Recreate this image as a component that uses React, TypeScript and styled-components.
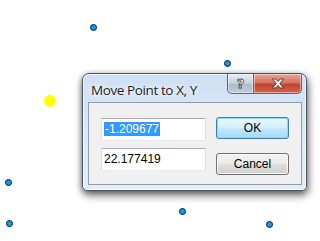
import React from 'react';
import styled, { createGlobalStyle } from 'styled-components';

const GlobalStyle = createGlobalStyle`
  html, body {
    margin: 0;
    padding: 0;
    background: #ffffff;
    width: 320px;
    height: 241px;
    overflow: hidden;
  }
`;

const Canvas = styled.div`
  position: relative;
  width: 320px;
  height: 241px;
  background: #ffffff;
  overflow: hidden;
`;

const Dot = styled.div<{ highlight?: boolean }>`
  position: absolute;
  width: ${({ highlight }) => (highlight ? '12px' : '7px')};
  height: ${({ highlight }) => (highlight ? '12px' : '7px')};
  margin-left: ${({ highlight }) => (highlight ? '-6px' : '-3.5px')};
  margin-top: ${({ highlight }) => (highlight ? '-6px' : '-3.5px')};
  border-radius: 50%;
  box-sizing: border-box;
  background: ${({ highlight }) => (highlight ? '#ffff00' : '#0a9cf0')};
  border: ${({ highlight }) => (highlight ? 'none' : '1px solid #0b1a2a')};
`;

const Window = styled.div`
  position: absolute;
  left: 82px;
  top: 73px;
  width: 225px;
  height: 118px;
  box-sizing: border-box;
  border: 1px solid #4b5561;
  border-radius: 7px 7px 5px 5px;
  background: linear-gradient(180deg, #cfdff3 0%, #d8e6f6 40%, #e2edf9 100%);
  box-shadow: 1px 4px 9px rgba(0, 0, 0, 0.6), -1px 1px 5px rgba(0, 0, 0, 0.25),
    inset 0 0 0 1px rgba(255, 255, 255, 0.7);
  display: flex;
  flex-direction: column;
  padding: 0 4px 5px 5px;
`;

const TitleBar = styled.div`
  height: 28px;
  display: flex;
  align-items: flex-start;
  justify-content: space-between;
`;

const Title = styled.span`
  font-family: 'Open Sans', 'Noto Sans', sans-serif;
  font-size: 13.5px;
  letter-spacing: -0.4px;
  color: #1a1a1a;
  margin: 7px 0 0 3px;
  text-shadow: 0 0 6px #ffffff, 0 0 3px #ffffff;
`;

const CaptionButtons = styled.div`
  display: flex;
`;

const CaptionButton = styled.div<{ close?: boolean }>`
  width: ${({ close }) => (close ? '48px' : '27px')};
  height: 20px;
  box-sizing: border-box;
  border: 1px solid #5d6976;
  border-top: none;
  border-left: ${({ close }) => (close ? 'none' : '1px solid #5d6976')};
  border-radius: ${({ close }) => (close ? '0 0 5px 0' : '0 0 0 5px')};
  background: ${({ close }) =>
    close
      ? 'linear-gradient(180deg, #e8a79a 0%, #d5735f 45%, #c2452d 55%, #d0634a 100%)'
      : 'linear-gradient(180deg, #e6edf5 0%, #c8d3df 45%, #aebccc 55%, #bfccd9 100%)'};
  box-shadow: inset 0 0 0 1px rgba(255, 255, 255, 0.45);
  display: flex;
  align-items: center;
  justify-content: center;
`;

const HelpGlyph = styled.span`
  font-family: 'DejaVu Sans', sans-serif;
  font-weight: bold;
  font-size: 13px;
  line-height: 1;
  color: #ffffff;
  -webkit-text-stroke: 0.8px #3d4752;
  margin-top: -1px;
`;

const Client = styled.div`
  flex: 1;
  box-sizing: border-box;
  border: 1px solid #8e9cb0;
  background: #f0f0f0;
  display: flex;
  padding: 14px 12px 0 12px;
  gap: 10px;
`;

const InputColumn = styled.div`
  display: flex;
  flex-direction: column;
  gap: 7px;
  padding-top: 1px;
`;

const ButtonColumn = styled.div`
  display: flex;
  flex-direction: column;
  gap: 14px;
`;

const TextBox = styled.div`
  width: 105px;
  height: 23px;
  box-sizing: border-box;
  background: #ffffff;
  border: 1px solid #dbdfe6;
  border-top-color: #abadb3;
  border-bottom-color: #e3e9ef;
  padding: 3px 0 0 2px;
  font-family: 'Liberation Sans', Arial, sans-serif;
  font-size: 12px;
  line-height: 15px;
  color: #000000;
`;

const Selected = styled.span`
  background: #3399ff;
  color: #ffffff;
  padding: 0 1px;
`;

const PushButton = styled.div<{ primary?: boolean }>`
  width: 73px;
  height: 22px;
  box-sizing: border-box;
  border-radius: 3px;
  border: 1px solid ${({ primary }) => (primary ? '#3c7fb1' : '#707070')};
  background: ${({ primary }) =>
    primary
      ? 'linear-gradient(180deg, #eaf6fd 0%, #d9f0fc 45%, #bee6fd 55%, #a7d9f5 100%)'
      : 'linear-gradient(180deg, #f2f2f2 0%, #ebebeb 45%, #dddddd 55%, #cfcfcf 100%)'};
  box-shadow: inset 0 0 0 1px ${({ primary }) => (primary ? '#7de0fb' : '#fcfcfc')};
  display: flex;
  align-items: center;
  justify-content: center;
  font-family: 'Liberation Sans', Arial, sans-serif;
  font-size: 12px;
  color: #000000;
`;

const points = [
  { x: 93, y: 27 },
  { x: 227, y: 63 },
  { x: 8, y: 182 },
  { x: 9, y: 223 },
  { x: 182, y: 211 },
  { x: 269, y: 224 },
];

const CloseIcon = () => (
  <svg width="14" height="11" viewBox="0 0 14 11">
    <path
      d="M1.5 1 H4.8 L7 3.6 L9.2 1 H12.5 L8.8 5.5 L12.5 10 H9.2 L7 7.4 L4.8 10 H1.5 L5.2 5.5 Z"
      fill="#ffffff"
      stroke="#43302c"
      strokeWidth="0.9"
      strokeLinejoin="round"
    />
  </svg>
);

export default function App() {
  return (
    <>
      <GlobalStyle />
      <Canvas>
        {points.map((p, i) => (
          <Dot key={i} style={{ left: p.x, top: p.y }} />
        ))}
        <Dot highlight style={{ left: 49.5, top: 100.5 }} />
        <Window>
          <TitleBar>
            <Title>Move Point to X, Y</Title>
            <CaptionButtons>
              <CaptionButton>
                <HelpGlyph>?</HelpGlyph>
              </CaptionButton>
              <CaptionButton close>
                <CloseIcon />
              </CaptionButton>
            </CaptionButtons>
          </TitleBar>
          <Client>
            <InputColumn>
              <TextBox>
                <Selected>-1.209677</Selected>
              </TextBox>
              <TextBox>22.177419</TextBox>
            </InputColumn>
            <ButtonColumn>
              <PushButton primary>OK</PushButton>
              <PushButton>Cancel</PushButton>
            </ButtonColumn>
          </Client>
        </Window>
      </Canvas>
    </>
  );
}
